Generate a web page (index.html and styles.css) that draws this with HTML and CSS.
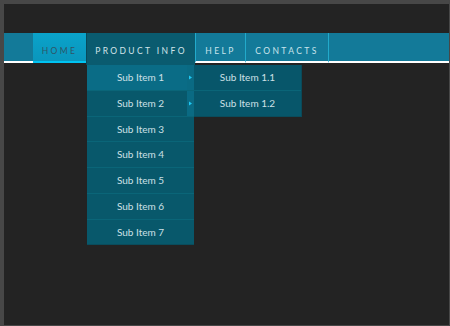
FILE: index.html
```html
<!DOCTYPE html>
<html>
<head>
<meta charset="utf-8">
<link rel="stylesheet" href="styles.css">
</head>
<body>
<div class="frame">
  <ul class="nav">
    <li class="lead"></li>
    <li class="item home">Home</li>
    <li class="item product">Product Info
      <ul class="sub">
        <li class="sub-item has-sub hover">Sub Item 1
          <ul class="sub sub2">
            <li class="sub-item">Sub Item 1.1</li>
            <li class="sub-item">Sub Item 1.2</li>
          </ul>
        </li>
        <li class="sub-item has-sub">Sub Item 2</li>
        <li class="sub-item">Sub Item 3</li>
        <li class="sub-item">Sub Item 4</li>
        <li class="sub-item">Sub Item 5</li>
        <li class="sub-item">Sub Item 6</li>
        <li class="sub-item">Sub Item 7</li>
      </ul>
    </li>
    <li class="item help">Help</li>
    <li class="item contacts">Contacts</li>
    <li class="fill"></li>
  </ul>
</div>
</body>
</html>
```
FILE: styles.css
```css
html, body {
  margin: 0;
  padding: 0;
}
body {
  background: #474747;
  width: 450px;
  height: 326px;
  overflow: hidden;
  font-family: Lato, "Open Sans", sans-serif;
}
.frame {
  margin: 4px 1px 0 4px;
  height: 321px;
  background: #232323;
  padding-top: 29px;
  box-sizing: border-box;
}
.nav {
  list-style: none;
  margin: 0;
  padding: 0;
  display: flex;
  align-items: flex-start;
  height: 30px;
}
.nav > li {
  box-sizing: border-box;
  height: 30px;
  background: #137a99;
  border-bottom: 2px solid #ffffff;
}
.lead {
  width: 29px;
}
.item {
  text-transform: uppercase;
  font-size: 8.5px;
  letter-spacing: 2.4px;
  text-align: center;
  line-height: 36px;
  color: #c9e4ec;
  position: relative;
}
.nav > .home {
  width: 53px;
  background: linear-gradient(#0aa3ca, #0a96bc);
  border-bottom-color: #00c3f2;
  color: #2e5566;
}
.nav > .product {
  width: 109px;
  height: 32px;
  border-left: 1px solid #08495a;
  border-bottom: none;
  background: #0a5b6f;
  color: #d2e3e9;
}
.nav > .help {
  width: 50px;
  border-left: 1px solid #22aacb;
}
.nav > .contacts {
  width: 83px;
  border-left: 1px solid #22aacb;
}
.nav > .fill {
  flex: 1;
  border-left: 1px solid #22aacb;
}
.sub {
  list-style: none;
  margin: 0;
  padding: 0;
  position: absolute;
  top: 32px;
  left: 0;
  width: 107px;
  background: #08586b;
  line-height: normal;
}
.sub-item {
  position: relative;
  height: 24.75px;
  border-bottom: 1px solid #0a6578;
  text-transform: none;
  letter-spacing: 0;
  font-size: 10px;
  line-height: 25px;
  color: #cde0e6;
  text-align: center;
}
.sub-item:last-child {
  border-bottom-color: #0a4c5c;
}
.has-sub::after {
  content: "";
  position: absolute;
  right: 0;
  top: 0;
  width: 7px;
  height: 25px;
  background: #0a6a83 url("data:image/svg+xml;utf8,<svg xmlns='http://www.w3.org/2000/svg' width='7' height='25'><path d='M2 10.5 L5 12.5 L2 14.5 Z' fill='%2320c8f2'/></svg>") no-repeat;
}
.hover {
  background: #0a6c86;
}
.sub2 {
  top: 0;
  left: 107px;
  background: #07566a;
  border-right: 1px solid #0a4a59;
}
```
